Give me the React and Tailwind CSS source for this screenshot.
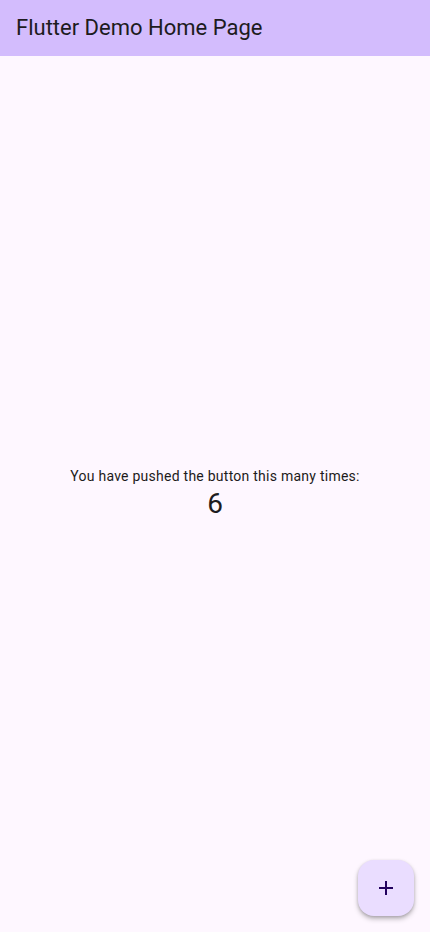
import React, { useState } from "react";

export default function App() {
  const [count, setCount] = useState(6);

  return (
    <div
      className="relative flex h-[932px] w-full flex-col bg-[#fef7ff] text-[#1d1b20]"
      style={{ fontFamily: "Roboto, 'Noto Sans', sans-serif" }}
    >
      <header className="flex h-14 shrink-0 items-center bg-[#d3bcfd] px-4">
        <h1 className="text-[22px] leading-7 font-normal text-[#1d1b20]">Flutter Demo Home Page</h1>
      </header>

      <main className="flex flex-1 flex-col items-center justify-center">
        <p className="text-sm leading-5 tracking-[0.25px]">You have pushed the button this many times:</p>
        <p className="text-[28px] leading-9">{count}</p>
      </main>

      <button
        type="button"
        onClick={() => setCount(count + 1)}
        className="absolute right-4 bottom-4 flex h-14 w-14 items-center justify-center rounded-2xl bg-[#eaddff] text-[#21005d] shadow-[0_3px_5px_rgba(0,0,0,0.25),0_1px_3px_rgba(0,0,0,0.15)]"
      >
        <svg width="24" height="24" viewBox="0 0 24 24" fill="currentColor">
          <path d="M19 13h-6v6h-2v-6H5v-2h6V5h2v6h6v2z" />
        </svg>
      </button>
    </div>
  );
}
